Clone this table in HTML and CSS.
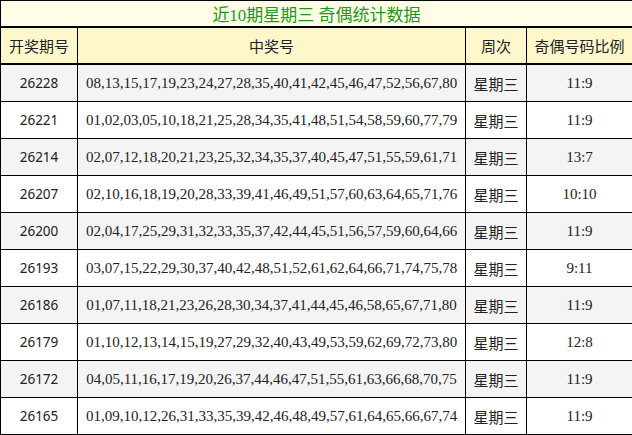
FILE: index.html
```html
<!DOCTYPE html>
<html lang="zh-CN">
<head>
<meta charset="utf-8">
<title>近10期星期三 奇偶统计数据</title>
<link rel="stylesheet" href="styles.css">
</head>
<body>
<table class="stats">
  <colgroup>
    <col class="c-issue">
    <col class="c-nums">
    <col class="c-day">
    <col class="c-ratio">
  </colgroup>
  <thead>
    <tr class="title-row"><th colspan="4" class="title">近10期星期三 奇偶统计数据</th></tr>
    <tr class="head-row">
      <th>开奖期号</th>
      <th>中奖号</th>
      <th>周次</th>
      <th>奇偶号码比例</th>
    </tr>
  </thead>
  <tbody>
    <tr class="alt"><td class="issue">26228</td><td class="nums">08,13,15,17,19,23,24,27,28,35,40,41,42,45,46,47,52,56,67,80</td><td class="day">星期三</td><td class="ratio">11:9</td></tr>
    <tr><td class="issue">26221</td><td class="nums">01,02,03,05,10,18,21,25,28,34,35,41,48,51,54,58,59,60,77,79</td><td class="day">星期三</td><td class="ratio">11:9</td></tr>
    <tr class="alt"><td class="issue">26214</td><td class="nums">02,07,12,18,20,21,23,25,32,34,35,37,40,45,47,51,55,59,61,71</td><td class="day">星期三</td><td class="ratio">13:7</td></tr>
    <tr><td class="issue">26207</td><td class="nums">02,10,16,18,19,20,28,33,39,41,46,49,51,57,60,63,64,65,71,76</td><td class="day">星期三</td><td class="ratio">10:10</td></tr>
    <tr class="alt"><td class="issue">26200</td><td class="nums">02,04,17,25,29,31,32,33,35,37,42,44,45,51,56,57,59,60,64,66</td><td class="day">星期三</td><td class="ratio">11:9</td></tr>
    <tr><td class="issue">26193</td><td class="nums">03,07,15,22,29,30,37,40,42,48,51,52,61,62,64,66,71,74,75,78</td><td class="day">星期三</td><td class="ratio">9:11</td></tr>
    <tr class="alt"><td class="issue">26186</td><td class="nums">01,07,11,18,21,23,26,28,30,34,37,41,44,45,46,58,65,67,71,80</td><td class="day">星期三</td><td class="ratio">11:9</td></tr>
    <tr><td class="issue">26179</td><td class="nums">01,10,12,13,14,15,19,27,29,32,40,43,49,53,59,62,69,72,73,80</td><td class="day">星期三</td><td class="ratio">12:8</td></tr>
    <tr class="alt"><td class="issue">26172</td><td class="nums">04,05,11,16,17,19,20,26,37,44,46,47,51,55,61,63,66,68,70,75</td><td class="day">星期三</td><td class="ratio">11:9</td></tr>
    <tr><td class="issue">26165</td><td class="nums">01,09,10,12,26,31,33,35,39,42,46,48,49,57,61,64,65,66,67,74</td><td class="day">星期三</td><td class="ratio">11:9</td></tr>
  </tbody>
</table>
</body>
</html>
```

FILE: styles.css
```css
html, body {
  margin: 0;
  padding: 0;
  background: #ffffff;
}

.stats {
  border-collapse: collapse;
  table-layout: fixed;
  width: 632px;
  font-family: "Liberation Serif", "Noto Sans CJK SC", serif;
  color: #222222;
}

.c-issue { width: 77px; }
.c-nums { width: 388px; }
.c-day { width: 61px; }
.c-ratio { width: 106px; }

.stats th,
.stats td {
  border: 1px solid #000000;
  padding: 0;
  text-align: center;
  vertical-align: middle;
  white-space: nowrap;
  overflow: hidden;
}

.title-row th {
  height: 25px;
  background: #fffde6;
  color: #1e961e;
  font-size: 17px;
  font-weight: normal;
  border-bottom: 2px solid #000000;
}

.head-row th {
  height: 35px;
  background: #fff7cc;
  font-family: "Noto Sans CJK SC", sans-serif;
  font-size: 15px;
  font-weight: normal;
  color: #222222;
  border-bottom: 2px solid #000000;
}

.stats tbody td {
  height: 36px;
}

.stats tbody tr.alt td {
  background: #f4f4f4;
}

.issue {
  font-family: "Noto Sans", "Noto Sans CJK SC", sans-serif;
  font-size: 13.5px;
}

.nums {
  font-size: 15px;
}

.day {
  font-family: "Noto Sans CJK SC", sans-serif;
  font-size: 15px;
}

.ratio {
  font-size: 15px;
}
```
